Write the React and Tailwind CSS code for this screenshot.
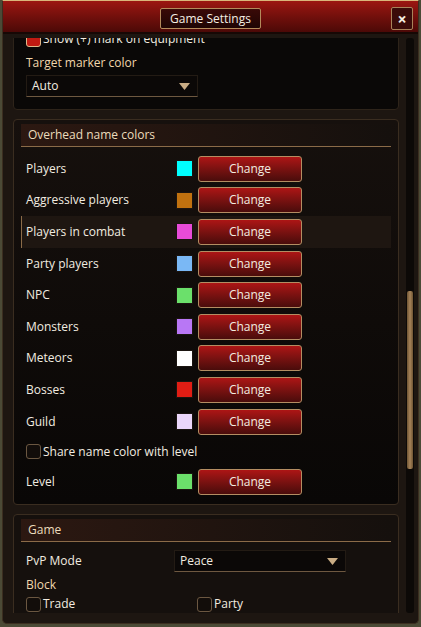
import React from "react";

const colorRows = [
  { label: "Players", color: "#00ffff" },
  { label: "Aggressive players", color: "#c0710f" },
  { label: "Players in combat", color: "#e84bd8", active: true },
  { label: "Party players", color: "#7ab8f5" },
  { label: "NPC", color: "#6be06b" },
  { label: "Monsters", color: "#b877f5" },
  { label: "Meteors", color: "#ffffff" },
  { label: "Bosses", color: "#e01d14" },
  { label: "Guild", color: "#ead6fa" },
];

function ChangeButton() {
  return (
    <button className="w-[104px] h-[26px] rounded-[3px] border border-[#b48d62] bg-gradient-to-b from-[#ad1515] to-[#4a0c0b] text-[12px] text-[#f2ece0] leading-none">
      Change
    </button>
  );
}

function Swatch({ color }) {
  return <div className="w-[17px] h-[17px] mr-[5px] border border-[#1a1410]" style={{ backgroundColor: color }} />;
}

function Caret() {
  return (
    <svg width="11" height="7" viewBox="0 0 11 7">
      <path d="M0 0 H11 L5.5 7 Z" fill="#c9ac84" />
    </svg>
  );
}

function Select({ value, className }) {
  return (
    <div className={"h-[22px] flex items-center justify-between pl-[5px] pr-[7px] bg-[#0b0807] border border-[#231b14] border-b-[#6e5840] text-[12px] text-[#f2ece0] " + className}>
      <span>{value}</span>
      <Caret />
    </div>
  );
}

function Checkbox({ label, checked }) {
  return (
    <div className="flex items-center h-[20px]">
      <div
        className={
          "w-[15px] h-[15px] rounded-[3px] border mr-[2px] " +
          (checked ? "bg-[#c01a12] border-[#e0b98a]" : "bg-[#120d0a] border-[#6b5741]")
        }
      />
      <span className="text-[12px] text-[#f2ece0]">{label}</span>
    </div>
  );
}

function SectionHeader({ title }) {
  return (
    <div className="h-[23px] flex items-center pl-[7px] bg-gradient-to-r from-[#2c1811] to-[#15100d] border-b border-[#8b6b48] text-[12px] text-[#ecdcbc]">
      {title}
    </div>
  );
}

export default function App() {
  return (
    <div className="w-[421px] h-[627px] bg-[#4b4a36] px-[2px] pb-[3px] font-['Segoe_UI','Open_Sans',sans-serif] overflow-hidden">
      <div className="h-full flex flex-col bg-[#1d1611] border border-[#3b2e20] border-t-[#d9b57a] rounded-b-[5px] overflow-hidden">
        {/* title bar */}
        <div className="relative h-[33px] shrink-0 flex items-center justify-center bg-gradient-to-b from-[#9c1611] to-[#4c0907] border-b-2 border-[#170805]">
          <div className="h-[21px] px-[9px] mt-[4px] flex items-center bg-gradient-to-b from-[#3a0a08] to-[#1f0504] border border-[#b38a5b] rounded-[2px] text-[12px] text-[#f4eee2]">
            Game Settings
          </div>
          <div className="absolute right-[5px] top-[6px] w-[22px] h-[23px] flex items-center justify-center bg-[#3a0b09] border border-[#a8835a] rounded-[2px] text-[16px] font-bold text-[#f4eee2] leading-none">
            ×
          </div>
        </div>

        {/* body */}
        <div className="flex-1 flex pl-[10px] pr-[4px] pt-[4px] pb-[7px] min-h-0">
          <div className="w-[387px] h-[575px] overflow-hidden flex flex-col gap-[9px]">
            {/* clipped first panel */}
            <div className="shrink-0 -mt-[16px] bg-[#0a0807] border border-[#2e241a] rounded-[4px] px-[12px] pb-[12px]">
              <div className="mt-[6px]">
                <Checkbox label="Show (+) mark on equipment" checked />
              </div>
              <div className="mt-[5px] text-[12px] text-[#f1d7ac] leading-[18px]">Target marker color</div>
              <Select value="Auto" className="mt-[3px] w-[172px]" />
            </div>

            {/* overhead name colors */}
            <div className="shrink-0 bg-gradient-to-b from-[#16100d] to-[#090706] border border-[#3a2d20] rounded-[4px] px-[7px] pt-[4px] pb-[7px]">
              <SectionHeader title="Overhead name colors" />
              <div className="mt-[6px] flex flex-col">
                {colorRows.map((r) => (
                  <div
                    key={r.label}
                    className={
                      "h-[31.6px] flex items-center pl-[4px] border-l " +
                      (r.active ? "bg-[#1e1611] border-[#8b6b48]" : "border-transparent")
                    }
                  >
                    <span className="w-[150px] text-[12px] text-[#f2ece0]">{r.label}</span>
                    <Swatch color={r.color} />
                    <ChangeButton />
                  </div>
                ))}
                <div className="h-[29px] flex items-center pl-[4px] border-l border-transparent">
                  <Checkbox label="Share name color with level" />
                </div>
                <div className="h-[31px] flex items-center pl-[4px] border-l border-transparent">
                  <span className="w-[150px] text-[12px] text-[#f2ece0]">Level</span>
                  <Swatch color="#6be06b" />
                  <ChangeButton />
                </div>
              </div>
            </div>

            {/* game */}
            <div className="shrink-0 bg-[#15100d] border border-[#3a2d20] rounded-[4px] px-[7px] pt-[4px] pb-[10px]">
              <SectionHeader title="Game" />
              <div className="mt-[8px] h-[22px] flex items-center pl-[5px]">
                <span className="w-[148px] text-[12px] text-[#f2ece0]">PvP Mode</span>
                <Select value="Peace" className="w-[172px]" />
              </div>
              <div className="mt-[4px] pl-[5px] text-[12px] text-[#f1d7ac] leading-[18px]">Block</div>
              <div className="pl-[5px] flex">
                <div className="w-[171px]">
                  <Checkbox label="Trade" />
                </div>
                <Checkbox label="Party" />
              </div>
            </div>
          </div>

          {/* scrollbar */}
          <div className="ml-[7px] w-[8px] h-[575px] bg-[#0c0907] rounded-[3px] relative">
            <div className="absolute left-[1px] top-[253px] w-[6px] h-[178px] rounded-[2px] bg-gradient-to-r from-[#6e5433] via-[#a7845a] to-[#6e5433]" />
          </div>
        </div>
      </div>
    </div>
  );
}
